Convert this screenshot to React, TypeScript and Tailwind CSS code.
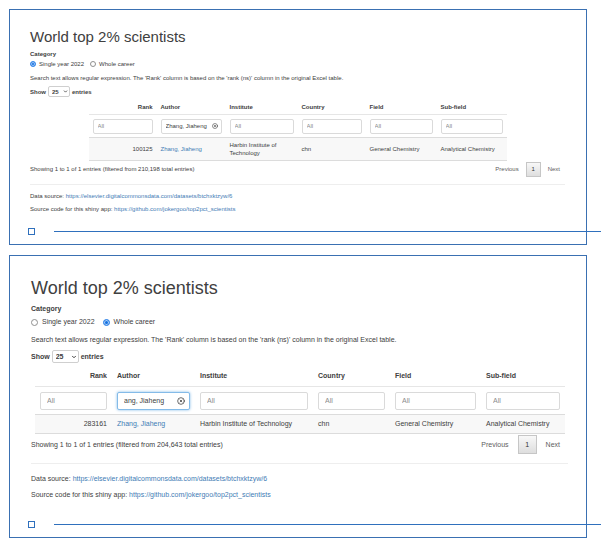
import { useState } from "react";
import { ChevronDown, CircleX } from "lucide-react";

type Row = {
  rank: string;
  author: string;
  institute: string;
  country: string;
  field: string;
  subField: string;
};

const small = {
  panel: "pt-[18px] pl-5 pr-[21px] text-[6px] leading-[8px]",
  title: "text-[15px] leading-[18px]",
  category: "pt-1",
  radios: "mt-[2px] gap-[6px]",
  radioLabel: "gap-[3px]",
  radio: "size-[6px]",
  note: "mt-[6px]",
  show: "mt-1 h-[11px] gap-[2px]",
  select: "h-[11px] w-[22px] pl-[3px]",
  chevron: "right-[2px] size-[5px]",
  table: "mx-auto mt-1 w-[418px]",
  cols: ["w-[68px]", "w-[69px]", "w-[72px]", "w-[68px]", "w-[71px]", "w-[70px]"],
  head: "h-[14px] px-1 pb-[2px]",
  filter: "h-[22px] px-1",
  box: "h-[15px] pl-1 pr-[3px]",
  focus: "border-[#dadada]",
  icon: "size-[6px]",
  cell: "h-[24px] px-1",
  info: "h-[16px] pr-[5px]",
  pager: "gap-[7px]",
  page: "h-[15px] w-[15px]",
  hr: "mt-[7px]",
  source: "mt-[7px]",
  code: "mt-[5px]",
  rule: "mt-[15px] -ml-[2px] -mr-[36px]",
};

const large: typeof small = {
  panel: "pt-[21px] pl-[21px] pr-[18px] text-[7px] leading-[10px]",
  title: "text-[18px] leading-[22px]",
  category: "pt-[5px]",
  radios: "mt-[3px] gap-2",
  radioLabel: "gap-1",
  radio: "size-[7px]",
  note: "mt-2",
  show: "mt-[5px] h-[13px] gap-[2px]",
  select: "h-[13px] w-[27px] pl-[3px]",
  chevron: "right-[2px] size-[6px]",
  table: "ml-1 mr-[3px] mt-1 w-[530px]",
  cols: ["w-[77px]", "w-[83px]", "w-[118px]", "w-[77px]", "w-[91px]", "w-[84px]"],
  head: "h-[20px] px-[5px] pb-[2px]",
  filter: "h-[27px] px-[5px]",
  box: "h-[18px] pl-[6px] pr-1",
  focus: "border-[#84bbe8] shadow-[0_0_3px_#84bbe8]",
  icon: "size-[8px]",
  cell: "h-[20px] px-[5px]",
  info: "mt-px h-[19px] pr-2",
  pager: "gap-[9px]",
  page: "h-[19px] w-[19px]",
  hr: "mt-[9px]",
  source: "mt-[10px]",
  code: "mt-[6px]",
  rule: "mt-[21px] -ml-[3px] -mr-[33px]",
};

const HEADERS = ["Rank", "Author", "Institute", "Country", "Field", "Sub-field"];
const CATEGORIES = ["Single year 2022", "Whole career"];

type PanelProps = {
  id: string;
  s: typeof small;
  initial: string;
  search: string;
  total: string;
  row: Row;
};

function Panel({ id, s, initial, search, total, row }: PanelProps) {
  const [category, setCategory] = useState(initial);
  const [author, setAuthor] = useState(search);
  const cell = `border-y border-[#dcdcdc] bg-[#f8f8f8] ${s.cell}`;

  return (
    <section className={`border border-[#3a70b2] pb-[9px] ${s.panel}`}>
      <h2 className={s.title}>World top 2% scientists</h2>
      <fieldset>
        <legend className={`font-bold ${s.category}`}>Category</legend>
        <div className={`flex items-center ${s.radios}`}>
          {CATEGORIES.map((c) => (
            <label key={c} className={`flex items-center ${s.radioLabel}`}>
              <input
                type="radio"
                name={`${id}-category`}
                checked={category === c}
                onChange={() => setCategory(c)}
                className={`appearance-none rounded-full border border-[#909090] checked:border-[#3d8bea] checked:bg-[#1370e0] checked:shadow-[inset_0_0_0_1px_#a9cdf7] ${s.radio}`}
              />
              {c}
            </label>
          ))}
        </div>
      </fieldset>
      <p className={s.note}>
        Search text allows regular expression. The 'Rank' column is based on the 'rank (ns)' column in the
        original Excel table.
      </p>
      <label className={`flex items-center font-bold ${s.show}`}>
        Show
        <span className="relative flex items-center">
          <select className={`appearance-none rounded-xs border border-[#cfcfcf] bg-white ${s.select}`} defaultValue="25">
            <option>10</option>
            <option>25</option>
            <option>50</option>
            <option>100</option>
          </select>
          <ChevronDown className={`pointer-events-none absolute ${s.chevron}`} strokeWidth={4} />
        </span>
        entries
      </label>

      <table className={`table-fixed border-separate border-spacing-0 text-left ${s.table}`}>
        <colgroup>
          {s.cols.map((w, i) => (
            <col key={i} className={w} />
          ))}
        </colgroup>
        <thead>
          <tr>
            {HEADERS.map((h) => (
              <th key={h} className={`border-b border-[#e6e6e6] ${h === "Rank" ? "text-right" : ""} ${s.head}`}>
                {h}
              </th>
            ))}
          </tr>
          <tr>
            {HEADERS.map((h) => (
              <td key={h} className={s.filter}>
                <div
                  className={`flex items-center rounded-xs border bg-white ${s.box} ${h === "Author" ? s.focus : "border-[#dadada]"}`}
                >
                  {h === "Author" ? (
                    <>
                      <input
                        aria-label="Filter Author"
                        value={author}
                        onChange={(e) => setAuthor(e.target.value)}
                        className="w-full min-w-0 outline-none"
                      />
                      <button aria-label="Clear Author filter" onClick={() => setAuthor("")} className="ml-1 shrink-0">
                        <CircleX className={`text-[#222] ${s.icon}`} strokeWidth={2} />
                      </button>
                    </>
                  ) : (
                    <input
                      aria-label={`Filter ${h}`}
                      placeholder="All"
                      className="w-full min-w-0 outline-none placeholder:text-[#8c8c8c]"
                    />
                  )}
                </div>
              </td>
            ))}
          </tr>
        </thead>
        <tbody>
          <tr>
            <td className={`text-right ${cell}`}>{row.rank}</td>
            <td className={cell}>
              <a href="#author" className="text-[#3f7cb5]">
                {row.author}
              </a>
            </td>
            <td className={cell}>{row.institute}</td>
            <td className={cell}>{row.country}</td>
            <td className={cell}>{row.field}</td>
            <td className={cell}>{row.subField}</td>
          </tr>
        </tbody>
      </table>

      <div className={`flex items-center justify-between ${s.info}`}>
        <p>Showing 1 to 1 of 1 entries (filtered from {total} total entries)</p>
        <nav aria-label="Pages" className={`flex items-center text-[#606060] ${s.pager}`}>
          <button>Previous</button>
          <button
            className={`border border-[#c6c6c6] bg-linear-to-b from-[#f8f8f8] to-[#dedede] text-[#333] ${s.page}`}
          >
            1
          </button>
          <button>Next</button>
        </nav>
      </div>
      <hr className={`border-[#eeeeee] ${s.hr}`} />
      <p className={s.source}>
        Data source:{" "}
        <a href="https://elsevier.digitalcommonsdata.com/datasets/btchxktzyw/6" className="text-[#3f7cb5]">
          https://elsevier.digitalcommonsdata.com/datasets/btchxktzyw/6
        </a>
      </p>
      <p className={s.code}>
        Source code for this shiny app:{" "}
        <a href="https://github.com/jokergoo/top2pct_scientists" className="text-[#3f7cb5]">
          https://github.com/jokergoo/top2pct_scientists
        </a>
      </p>
      <div className={`flex items-center ${s.rule}`}>
        <span className="size-[7px] shrink-0 border border-[#2f70bd]" />
        <span className="ml-[19px] h-px grow bg-[#2f70bd]" />
      </div>
    </section>
  );
}

const shared = {
  author: "Zhang, Jiaheng",
  institute: "Harbin Institute of Technology",
  country: "chn",
  field: "General Chemistry",
  subField: "Analytical Chemistry",
};

export default function App() {
  return (
    <main className="flex flex-col gap-[10px] bg-white py-[9px] pl-[9px] pr-[19px] font-['Liberation_Sans',Arial,sans-serif] text-[#404040]">
      <Panel
        id="year"
        s={small}
        initial="Single year 2022"
        search="Zhang, Jiaheng"
        total="210,198"
        row={{ rank: "100125", ...shared }}
      />
      <Panel
        id="career"
        s={large}
        initial="Whole career"
        search="ang, Jiaheng"
        total="204,643"
        row={{ rank: "283161", ...shared }}
      />
    </main>
  );
}
